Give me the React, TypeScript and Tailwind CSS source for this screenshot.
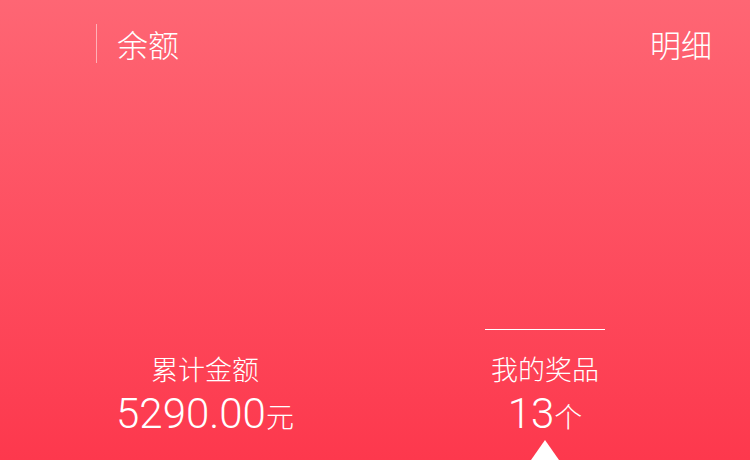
export default function App() {
  const cjk = { fontFamily: '"Noto Sans CJK SC", "Noto Sans", sans-serif' };
  const num = { fontFamily: 'Roboto, "Noto Sans CJK SC", sans-serif' };
  return (
    <div
      className="w-[750px] h-[460px] flex flex-col text-white overflow-hidden bg-[linear-gradient(180deg,#fe6674_0%,#fd384d_100%)]"
      style={cjk}
    >
      <div className="flex items-center justify-between h-[39px] mt-[24px] pr-[38px]">
        <div className="flex items-center h-full ml-[96px] border-l border-white/50 pl-[20px]">
          <span className="text-[31px] leading-none font-light">余额</span>
        </div>
        <span className="text-[31px] leading-none font-light">明细</span>
      </div>
      <div className="flex-1" />
      <div className="flex px-[35px]">
        <div className="w-[340px] flex flex-col items-center">
          <div className="h-px w-[120px]" />
          <div className="mt-[23px] text-[27px] leading-[32px] font-light">累计金额</div>
          <div className="mt-[6px] flex items-baseline leading-[46px]">
            <span className="text-[42px] font-light" style={num}>5290.00</span>
            <span className="text-[28px] font-light">元</span>
          </div>
          <div className="h-[21px]" />
        </div>
        <div className="w-[340px] flex flex-col items-center">
          <div className="h-px w-[120px] bg-white" />
          <div className="mt-[23px] text-[27px] leading-[32px] font-light">我的奖品</div>
          <div className="mt-[6px] flex items-baseline leading-[46px]">
            <span className="text-[42px] font-light" style={num}>13</span>
            <span className="text-[28px] font-light">个</span>
          </div>
          <div className="mt-[1px] w-0 h-0 border-l-[14px] border-r-[14px] border-b-[20px] border-l-transparent border-r-transparent border-b-white" />
        </div>
      </div>
    </div>
  );
}
